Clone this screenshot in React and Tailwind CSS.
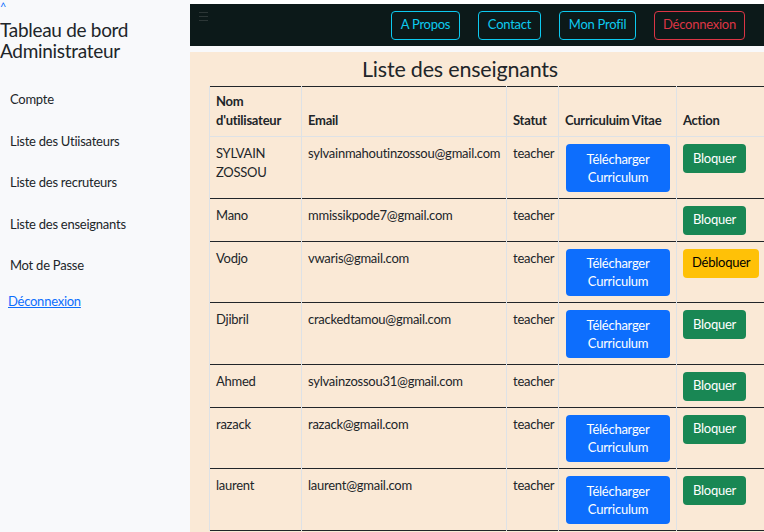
import React from "react";

const teachers = [
  { name: "SYLVAIN ZOSSOU", email: "sylvainmahoutinzossou@gmail.com", cv: true, blocked: false },
  { name: "Mano", email: "mmissikpode7@gmail.com", cv: false, blocked: false },
  { name: "Vodjo", email: "vwaris@gmail.com", cv: true, blocked: true },
  { name: "Djibril", email: "crackedtamou@gmail.com", cv: true, blocked: false },
  { name: "Ahmed", email: "sylvainzossou31@gmail.com", cv: false, blocked: false },
  { name: "razack", email: "razack@gmail.com", cv: true, blocked: false },
  { name: "laurent", email: "laurent@gmail.com", cv: true, blocked: false },
];

const menu = ["Compte", "Liste des Utiisateurs", "Liste des recruteurs", "Liste des enseignants", "Mot de Passe"];

const Sidebar = () => (
  <aside className="w-[190px] shrink-0 bg-[#f8f9fb] text-[#212529]">
    <div className="h-[10px] pl-0 text-[#0d6efd] text-[11px] leading-[14px]">^</div>
    <h1 className="text-[19px] leading-[21px] mt-[9px] font-normal tracking-[-0.3px]">
      Tableau de bord
      <br />
      Administrateur
    </h1>
    <ul className="mt-[28px] pl-[10px] text-[13px]">
      {menu.map((item) => (
        <li key={item} className="h-[41.5px] leading-[20px]">
          {item}
        </li>
      ))}
    </ul>
    <a href="#" className="block pl-[8px] -mt-[5px] text-[13px] text-[#0d6efd] underline">
      Déconnexion
    </a>
  </aside>
);

const NavButton = ({ label, width, danger }) => (
  <button
    className={
      (danger
        ? "h-[29px] rounded-[4px] border border-[#dc3545] text-[#dc3545] text-[13px] "
        : "h-[29px] rounded-[4px] border border-[#0dcaf0] text-[#0dcaf0] text-[13px] ") + width
    }
  >
    {label}
  </button>
);

const Topbar = () => (
  <div className="pt-[4px] bg-white">
    <div className="h-[42px] bg-[#0c1919] flex items-center justify-between pl-[9px] pr-[19px]">
      <div className="flex flex-col gap-[3px] -mt-[18px]">
        <span className="block w-[9px] h-[1px] bg-[#2c3636]"></span>
        <span className="block w-[9px] h-[1px] bg-[#2c3636]"></span>
        <span className="block w-[9px] h-[1px] bg-[#2c3636]"></span>
      </div>
      <div className="flex gap-[18px]">
        <NavButton label="A Propos" width="w-[69px]" />
        <NavButton label="Contact" width="w-[63px]" />
        <NavButton label="Mon Profil" width="w-[77px]" />
        <NavButton label="Déconnexion" width="w-[91px]" danger />
      </div>
    </div>
    <div className="h-[6px] bg-[#f8f9fb]"></div>
  </div>
);

const Table = () => (
  <table className="ml-[19px] border-collapse table-fixed w-[600px] text-[13px] text-[#212529]">
    <colgroup>
      <col className="w-[92px]" />
      <col className="w-[205px]" />
      <col className="w-[52px]" />
      <col className="w-[118px]" />
      <col className="w-[133px]" />
    </colgroup>
    <thead>
      <tr className="border-t border-[#212529] border-b border-b-[#dee2e6]">
        {["Nom d'utilisateur", "Email", "Statut", "Curriculuim Vitae", "Action"].map((h) => (
          <th
            key={h}
            className="border-x border-x-[#dee2e6] px-[6px] pt-[5px] pb-[6px] text-left align-bottom font-bold leading-[19px]"
          >
            {h}
          </th>
        ))}
      </tr>
    </thead>
    <tbody>
      {teachers.map((t) => (
        <tr key={t.email} className="border-b border-[#212529]">
          <td className="border-x border-x-[#dee2e6] px-[6px] pt-[7px] pb-[6px] align-top leading-[19px]">{t.name}</td>
          <td className="border-x border-x-[#dee2e6] px-[6px] pt-[7px] pb-[6px] align-top leading-[19px]">{t.email}</td>
          <td className="border-x border-x-[#dee2e6] px-[6px] pt-[7px] pb-[6px] align-top leading-[19px]">teacher</td>
          <td className="border-x border-x-[#dee2e6] px-[7px] pt-[7px] pb-[6px] align-top">
            {t.cv && (
              <button className="block w-[104px] h-[47.5px] rounded-[4px] bg-[#0d6efd] text-white leading-[18px] text-[13px]">
                Télécharger
                <br />
                Curriculum
              </button>
            )}
          </td>
          <td className="border-x border-x-[#dee2e6] px-[6px] pt-[7px] pb-[6px] align-top">
            {t.blocked ? (
              <button className="block h-[29px] px-[9px] rounded-[4px] bg-[#ffc107] text-black text-[13px]">
                Débloquer
              </button>
            ) : (
              <button className="block h-[29px] px-[10px] rounded-[4px] bg-[#198754] text-white text-[13px]">
                Bloquer
              </button>
            )}
          </td>
        </tr>
      ))}
    </tbody>
  </table>
);

export default function App() {
  return (
    <div className="flex w-[764px] h-[532px] overflow-hidden bg-[#f8f9fb] font-['Lato',sans-serif] tracking-[-0.25px]">
      <Sidebar />
      <main className="flex-1 min-w-0 overflow-hidden flex flex-col">
        <Topbar />
        <div className="flex-1 bg-[#fae9d6]">
          <h2 className="text-center text-[21.5px] leading-[34px] text-[#212529] pr-[34px] tracking-[-0.2px]">
            Liste des enseignants
          </h2>
          <Table />
        </div>
      </main>
    </div>
  );
}
